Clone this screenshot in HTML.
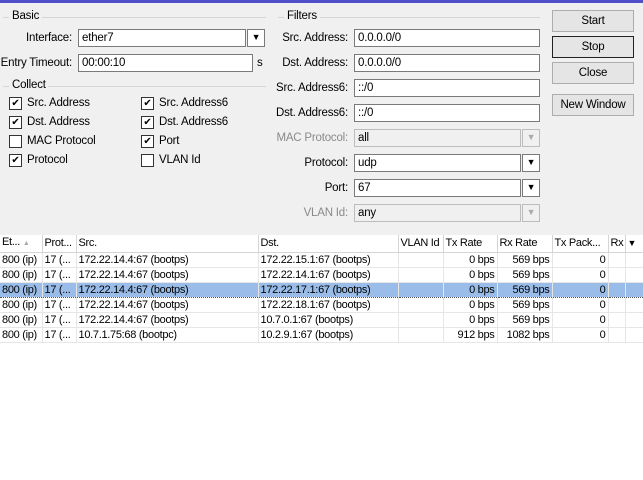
<!DOCTYPE html><html><head><style>
*{margin:0;padding:0;box-sizing:border-box}
body{width:643px;height:480px;background:#f0f0f0;font-family:"Liberation Sans",sans-serif;font-size:11.5px;letter-spacing:-0.2px;color:#000;position:relative;overflow:hidden}
.a{position:absolute;white-space:nowrap}
.bar{left:0;top:0;width:643px;height:3px;background:#5050c8}
.in{position:absolute;height:18px;background:#fff;border:1px solid #7a7a7a;padding:1px 3px;line-height:14px;white-space:nowrap}
.dis{background:#f0f0f0;border-color:#bcbcbc}
.dd{position:absolute;width:18px;height:18px;border:1px solid #7a7a7a;background:#fff;font-size:9px;text-align:center;line-height:15px}
.dd.d{border-color:#bcbcbc;color:#aaa;background:#f0f0f0}
.lbl{position:absolute;text-align:right;line-height:18px;white-space:nowrap}
.g{color:#8a8a8a}
.line{position:absolute;height:1px;background:#d5d5d5}
.cb{position:absolute;width:13px;height:13px;border:1px solid #333;background:#fff;font-size:10px;line-height:11px;text-align:center}
.btn{position:absolute;left:552px;width:82px;height:22px;border:1px solid #adadad;background:#e5e5e5;text-align:center;line-height:20px}
.tw{position:absolute;left:0;top:235px;width:643px;overflow:hidden}
table{border-collapse:collapse;table-layout:fixed;width:643px}
td,th{height:15px;padding:0 2px;font-weight:normal;text-align:left;white-space:nowrap;overflow:hidden;border-right:1px solid #e6e6e6;border-bottom:1px solid #e6e6e6;line-height:14px;font-size:11px;letter-spacing:-0.3px}
th{height:17px;border-right:1px solid #d5d5d5;border-bottom:1px solid #d5d5d5;background:#fff}
.r{text-align:right}
tr.s td{background:#99bde8;border-top:1px dotted #555;border-bottom:1px dotted #555}
</style></head><body>
<div class="a bar"></div>
<div style="position:absolute;left:0;top:235px;width:643px;height:245px;background:#fff;border-top:1px solid #bbb"></div>

<div class="line" style="left:3px;top:17px;width:6px"></div><div class="a" style="left:12px;top:10px">Basic</div><div class="line" style="left:42px;top:17px;width:224px"></div>
<div class="lbl" style="left:0;width:72px;top:29px">Interface:</div>
<div class="in" style="left:78px;top:29px;width:168px">ether7</div><div class="dd" style="left:247px;top:29px">&#9660;</div>
<div class="lbl" style="left:0;width:72px;top:54px">Entry Timeout:</div>
<div class="in" style="left:78px;top:54px;width:175px">00:00:10</div><div class="a" style="left:257px;top:57px">s</div>
<div class="line" style="left:3px;top:86px;width:6px"></div><div class="a" style="left:12px;top:79px">Collect</div><div class="line" style="left:48px;top:86px;width:218px"></div>

<div class="cb" style="left:9px;top:97px">✔</div><div class="a" style="left:27px;top:97px">Src. Address</div>
<div class="cb" style="left:9px;top:116px">✔</div><div class="a" style="left:27px;top:116px">Dst. Address</div>
<div class="cb" style="left:9px;top:135px"></div><div class="a" style="left:27px;top:135px">MAC Protocol</div>
<div class="cb" style="left:9px;top:154px">✔</div><div class="a" style="left:27px;top:154px">Protocol</div>
<div class="cb" style="left:141px;top:97px">✔</div><div class="a" style="left:159px;top:97px">Src. Address6</div>
<div class="cb" style="left:141px;top:116px">✔</div><div class="a" style="left:159px;top:116px">Dst. Address6</div>
<div class="cb" style="left:141px;top:135px">✔</div><div class="a" style="left:159px;top:135px">Port</div>
<div class="cb" style="left:141px;top:154px"></div><div class="a" style="left:159px;top:154px">VLAN Id</div>

<div class="line" style="left:278px;top:17px;width:6px"></div><div class="a" style="left:287px;top:10px">Filters</div><div class="line" style="left:320px;top:17px;width:220px"></div>
<div class="lbl" style="left:260px;width:88px;top:29px">Src. Address:</div><div class="in" style="left:354px;top:29px;width:186px">0.0.0.0/0</div>
<div class="lbl" style="left:260px;width:88px;top:54px">Dst. Address:</div><div class="in" style="left:354px;top:54px;width:186px">0.0.0.0/0</div>
<div class="lbl" style="left:260px;width:88px;top:79px">Src. Address6:</div><div class="in" style="left:354px;top:79px;width:186px">::/0</div>
<div class="lbl" style="left:260px;width:88px;top:104px">Dst. Address6:</div><div class="in" style="left:354px;top:104px;width:186px">::/0</div>
<div class="lbl g" style="left:260px;width:88px;top:129px">MAC Protocol:</div><div class="in dis" style="left:354px;top:129px;width:167px">all</div><div class="dd d" style="left:522px;top:129px">&#9660;</div>
<div class="lbl" style="left:260px;width:88px;top:154px">Protocol:</div><div class="in" style="left:354px;top:154px;width:167px">udp</div><div class="dd" style="left:522px;top:154px">&#9660;</div>
<div class="lbl" style="left:260px;width:88px;top:179px">Port:</div><div class="in" style="left:354px;top:179px;width:167px">67</div><div class="dd" style="left:522px;top:179px">&#9660;</div>
<div class="lbl g" style="left:260px;width:88px;top:204px">VLAN Id:</div><div class="in dis" style="left:354px;top:204px;width:167px">any</div><div class="dd d" style="left:522px;top:204px">&#9660;</div>

<div class="btn" style="top:10px">Start</div>
<div class="btn" style="top:36px;border:1px solid #222">Stop</div>
<div class="btn" style="top:62px">Close</div>
<div class="btn" style="top:94px">New Window</div>

<div class="tw"><table>
<colgroup><col style="width:42px"><col style="width:34px"><col style="width:182px"><col style="width:140px"><col style="width:45px"><col style="width:54px"><col style="width:55px"><col style="width:56px"><col style="width:17px"><col style="width:18px"></colgroup>
<tr><th>Et... <span style="color:#aaa;font-size:7px">▲</span></th><th>Prot...</th><th>Src.</th><th>Dst.</th><th>VLAN Id</th><th>Tx Rate</th><th>Rx Rate</th><th>Tx Pack...</th><th>Rx</th><th style="font-size:9px">▼</th></tr>
<tr><td>800 (ip)</td><td>17 (...</td><td>172.22.14.4:67 (bootps)</td><td>172.22.15.1:67 (bootps)</td><td></td><td class="r">0 bps</td><td class="r">569 bps</td><td class="r">0</td><td></td><td style="border-right:0"></td></tr>
<tr><td>800 (ip)</td><td>17 (...</td><td>172.22.14.4:67 (bootps)</td><td>172.22.14.1:67 (bootps)</td><td></td><td class="r">0 bps</td><td class="r">569 bps</td><td class="r">0</td><td></td><td style="border-right:0"></td></tr>
<tr class="s"><td>800 (ip)</td><td>17 (...</td><td>172.22.14.4:67 (bootps)</td><td>172.22.17.1:67 (bootps)</td><td></td><td class="r">0 bps</td><td class="r">569 bps</td><td class="r">0</td><td></td><td style="border-right:0"></td></tr>
<tr><td>800 (ip)</td><td>17 (...</td><td>172.22.14.4:67 (bootps)</td><td>172.22.18.1:67 (bootps)</td><td></td><td class="r">0 bps</td><td class="r">569 bps</td><td class="r">0</td><td></td><td style="border-right:0"></td></tr>
<tr><td>800 (ip)</td><td>17 (...</td><td>172.22.14.4:67 (bootps)</td><td>10.7.0.1:67 (bootps)</td><td></td><td class="r">0 bps</td><td class="r">569 bps</td><td class="r">0</td><td></td><td style="border-right:0"></td></tr>
<tr><td>800 (ip)</td><td>17 (...</td><td>10.7.1.75:68 (bootpc)</td><td>10.2.9.1:67 (bootps)</td><td></td><td class="r">912 bps</td><td class="r">1082 bps</td><td class="r">0</td><td></td><td style="border-right:0"></td></tr>
</table></div>
</body></html>
